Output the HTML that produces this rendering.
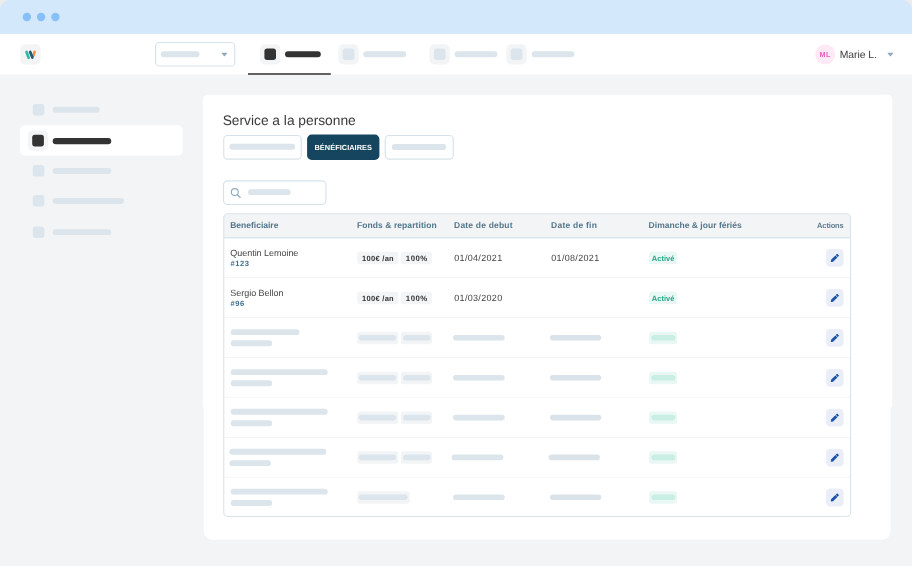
<!DOCTYPE html>
<html lang="fr">
<head>
<meta charset="utf-8">
<title>Service a la personne</title>
<style>
*{box-sizing:border-box;margin:0;padding:0}
html,body{width:912px;height:566px;overflow:hidden;background:#ececec}
body{font-family:"Liberation Sans",sans-serif;color:#333;position:relative}
.win{position:absolute;left:0;top:0;width:912px;height:566px;overflow:hidden;will-change:transform}
.win>svg{position:absolute;left:0;top:0;width:912px;height:566px;display:block}
.t{position:absolute;white-space:nowrap;line-height:1;text-rendering:geometricPrecision}
</style>
</head>
<body>
<div class="win">
<svg viewBox="0 0 912 566" width="912" height="566">
<rect x="0" y="33.5" width="912" height="532.5" fill="#f2f4f6"/>
<rect x="0" y="33.5" width="912" height="41" fill="#fff"/>
<path d="M0 34V10A10 10 0 0 1 10 0H902A10 10 0 0 1 912 10V34Z" fill="#d4e8fc"/>
<circle cx="26.9" cy="17" r="4.2" fill="#86c0f6"/>
<circle cx="41.1" cy="17" r="4.2" fill="#86c0f6"/>
<circle cx="55.4" cy="17" r="4.2" fill="#86c0f6"/>
<rect x="20.3" y="44.3" width="20.3" height="20.2" rx="5" fill="#f2f4f6"/>
<g stroke-linecap="round" fill="none"><path d="M26.5 51.9L28.6 57.7" stroke="#2db9a0" stroke-width="2.7"/><path d="M34.55 51.8L33.4 55.6" stroke="#f68e46" stroke-width="2.6"/><path d="M30.2 51.9L32.4 57.5" stroke="#1f5879" stroke-width="2.7"/></g>
<rect x="155.55" y="42.55" width="79.2" height="23.5" rx="3.9" fill="#fff" stroke="#d6e2e9" stroke-width="1.1"/>
<rect x="160.8" y="51.2" width="38.7" height="6" rx="3" fill="#dbe5eb"/>
<path transform="translate(221.2,52.4)" d="M0.9 0.3H5.5Q6.4 0.4 5.8 1.1L3.7 3.6Q3.2 4.1 2.7 3.6L0.6 1.1Q0 0.4 0.9 0.3Z" fill="#8faabc"/>
<path transform="translate(887.2,52.4)" d="M0.9 0.3H5.5Q6.4 0.4 5.8 1.1L3.7 3.6Q3.2 4.1 2.7 3.6L0.6 1.1Q0 0.4 0.9 0.3Z" fill="#8faabc"/>
<rect x="260" y="44.3" width="20.3" height="20.2" rx="5" fill="#f2f4f6"/>
<rect x="264.4" y="48.4" width="11.6" height="11.6" rx="2.7" fill="#333"/>
<rect x="285" y="51.2" width="35.8" height="6" rx="3" fill="#333"/>
<rect x="338.3" y="44.3" width="20.3" height="20.2" rx="5" fill="#f2f4f6"/>
<rect x="342.7" y="48.4" width="11.6" height="11.6" rx="2.7" fill="#dbe5eb"/>
<rect x="363.3" y="51.2" width="42.9" height="6" rx="3" fill="#dbe5eb"/>
<rect x="429.5" y="44.3" width="20.3" height="20.2" rx="5" fill="#f2f4f6"/>
<rect x="433.9" y="48.4" width="11.6" height="11.6" rx="2.7" fill="#dbe5eb"/>
<rect x="454.7" y="51.2" width="42.6" height="6" rx="3" fill="#dbe5eb"/>
<rect x="506.3" y="44.3" width="20.3" height="20.2" rx="5" fill="#f2f4f6"/>
<rect x="510.7" y="48.4" width="11.6" height="11.6" rx="2.7" fill="#dbe5eb"/>
<rect x="531.7" y="51.2" width="42.6" height="6" rx="3" fill="#dbe5eb"/>
<rect x="248" y="73" width="82.8" height="2" fill="#626262"/>
<circle cx="825.2" cy="54.3" r="10.05" fill="#fdeaf6"/>
<rect x="32.8" y="104" width="11.5" height="11.5" rx="2.7" fill="#dbe5eb"/>
<rect x="52.7" y="106.8" width="47.1" height="5.9" rx="2.95" fill="#dbe5eb"/>
<rect x="32.8" y="165.1" width="11.5" height="11.5" rx="2.7" fill="#dbe5eb"/>
<rect x="52.7" y="168" width="58.5" height="5.9" rx="2.95" fill="#dbe5eb"/>
<rect x="32.8" y="195" width="11.5" height="11.5" rx="2.7" fill="#dbe5eb"/>
<rect x="52.7" y="198" width="71.3" height="5.9" rx="2.95" fill="#dbe5eb"/>
<rect x="32.8" y="226.4" width="11.5" height="11.5" rx="2.7" fill="#dbe5eb"/>
<rect x="52.7" y="229.2" width="58.5" height="5.9" rx="2.95" fill="#dbe5eb"/>
<rect x="20.2" y="125.3" width="162.3" height="30.3" rx="4.5" fill="#fff"/>
<rect x="27.8" y="130.5" width="20.4" height="20.2" rx="5" fill="#f2f4f6"/>
<rect x="32.2" y="134.8" width="11.7" height="11.6" rx="2.7" fill="#333"/>
<rect x="52.7" y="138.1" width="58.5" height="6.1" rx="3.05" fill="#333"/>
<path d="M202.8 99.3A4.5 4.5 0 0 1 207.3 94.8H887.6A4.5 4.5 0 0 1 892.1 99.3V406.2Q890.5 406.6 890.5 408.6V531.3A8.5 8.5 0 0 1 882 539.8H212.2A8.5 8.5 0 0 1 203.7 531.3V406.5H202.8Z" fill="#fff"/>
<rect x="223.75" y="135.55" width="77.5" height="23.6" rx="3.9" fill="#fff" stroke="#d6e2e9" stroke-width="1.1"/>
<rect x="229.3" y="143.8" width="65.9" height="6" rx="3" fill="#dbe5eb"/>
<rect x="307.1" y="134.6" width="72.3" height="25.3" rx="4.5" fill="#15455f"/>
<rect x="385.25" y="135.55" width="68" height="23.6" rx="3.9" fill="#fff" stroke="#d6e2e9" stroke-width="1.1"/>
<rect x="391.8" y="143.9" width="54.4" height="6" rx="3" fill="#dbe5eb"/>
<rect x="223.55" y="180.85" width="102.4" height="23.6" rx="3.9" fill="#fff" stroke="#d6e2e9" stroke-width="1.1"/>
<g fill="none" stroke="#8faabc"><circle cx="234.8" cy="192.1" r="3.45" stroke-width="1.1"/><path d="M237.4 194.7L240.1 197.3" stroke-width="1.2" stroke-linecap="round"/></g>
<rect x="248" y="189.2" width="42.7" height="5.9" rx="2.95" fill="#dbe5eb"/>
<path d="M223.75 237.5V217.7A4 4 0 0 1 227.75 213.7H846.55A4 4 0 0 1 850.55 217.7V237.5Z" fill="#f2f4f6"/>
<rect x="223.75" y="237" width="626.8" height="1.4" fill="#dae5eb"/>
<rect x="224.25" y="277.1" width="625.8" height="1" fill="#f3f5f7"/>
<rect x="224.25" y="317" width="625.8" height="1" fill="#f3f5f7"/>
<rect x="224.25" y="356.9" width="625.8" height="1" fill="#f3f5f7"/>
<rect x="224.25" y="396.8" width="625.8" height="1" fill="#f3f5f7"/>
<rect x="224.25" y="436.9" width="625.8" height="1" fill="#f3f5f7"/>
<rect x="224.25" y="476.8" width="625.8" height="1" fill="#f3f5f7"/>
<rect x="223.75" y="213.7" width="626.8" height="302.8" rx="4" fill="none" stroke="#dae5eb" stroke-width="1.15"/>
<rect x="357.2" y="251.8" width="41.1" height="12.5" rx="3" fill="#f2f4f6"/>
<rect x="400.8" y="251.8" width="31.2" height="12.5" rx="3" fill="#f2f4f6"/>
<rect x="649.1" y="251.8" width="27.9" height="12.5" rx="3" fill="#e9f8f4"/>
<rect x="826" y="249" width="17.7" height="17.8" rx="4.2" fill="#e9eef8"/>
<path transform="translate(830.85,253.95) scale(0.0156)" d="M290.74 93.24l128.02 128.02-277.99 277.99-114.14 12.6C11.35 513.54-1.56 500.62.14 485.34l12.7-114.22 277.9-277.88zm207.2-19.06l-60.11-60.11c-18.75-18.75-49.16-18.75-67.91 0l-56.55 56.55 128.02 128.02 56.55-56.55c18.75-18.76 18.75-49.16 0-67.91z" fill="#1d52a8"/>
<rect x="357.2" y="291.8" width="41.1" height="12.5" rx="3" fill="#f2f4f6"/>
<rect x="400.8" y="291.8" width="31.2" height="12.5" rx="3" fill="#f2f4f6"/>
<rect x="649.1" y="291.8" width="27.9" height="12.5" rx="3" fill="#e9f8f4"/>
<rect x="826" y="289" width="17.7" height="17.8" rx="4.2" fill="#e9eef8"/>
<path transform="translate(830.85,293.95) scale(0.0156)" d="M290.74 93.24l128.02 128.02-277.99 277.99-114.14 12.6C11.35 513.54-1.56 500.62.14 485.34l12.7-114.22 277.9-277.88zm207.2-19.06l-60.11-60.11c-18.75-18.75-49.16-18.75-67.91 0l-56.55 56.55 128.02 128.02 56.55-56.55c18.75-18.76 18.75-49.16 0-67.91z" fill="#1d52a8"/>
<rect x="230.7" y="329.2" width="68.6" height="5.9" rx="2.95" fill="#dbe5eb"/>
<rect x="230.7" y="340.3" width="41.5" height="5.9" rx="2.95" fill="#dbe5eb"/>
<rect x="357.2" y="331.7" width="41.1" height="12.5" rx="3" fill="#f2f4f6"/>
<rect x="400.8" y="331.7" width="31.2" height="12.5" rx="3" fill="#f2f4f6"/>
<rect x="358.8" y="335" width="37.4" height="5.6" rx="2.8" fill="#dbe5eb"/>
<rect x="403" y="335" width="27.5" height="5.6" rx="2.8" fill="#dbe5eb"/>
<rect x="649.1" y="331.7" width="27.9" height="12.5" rx="3" fill="#e9f8f4"/>
<rect x="651.2" y="335" width="24.1" height="5.6" rx="2.8" fill="#c9eee4"/>
<rect x="453" y="335" width="51.7" height="5.6" rx="2.8" fill="#dbe5eb"/>
<rect x="550" y="335" width="51.3" height="5.6" rx="2.8" fill="#dbe3ea"/>
<rect x="826" y="329" width="17.7" height="17.8" rx="4.2" fill="#e9eef8"/>
<path transform="translate(830.85,333.95) scale(0.0156)" d="M290.74 93.24l128.02 128.02-277.99 277.99-114.14 12.6C11.35 513.54-1.56 500.62.14 485.34l12.7-114.22 277.9-277.88zm207.2-19.06l-60.11-60.11c-18.75-18.75-49.16-18.75-67.91 0l-56.55 56.55 128.02 128.02 56.55-56.55c18.75-18.76 18.75-49.16 0-67.91z" fill="#1d52a8"/>
<rect x="230.7" y="369.2" width="97" height="5.9" rx="2.95" fill="#dbe5eb"/>
<rect x="230.7" y="380.3" width="41.5" height="5.9" rx="2.95" fill="#dbe5eb"/>
<rect x="357.2" y="371.7" width="41.1" height="12.5" rx="3" fill="#f2f4f6"/>
<rect x="400.8" y="371.7" width="31.2" height="12.5" rx="3" fill="#f2f4f6"/>
<rect x="358.8" y="375" width="37.4" height="5.6" rx="2.8" fill="#dbe5eb"/>
<rect x="403" y="375" width="27.5" height="5.6" rx="2.8" fill="#dbe5eb"/>
<rect x="649.1" y="371.7" width="27.9" height="12.5" rx="3" fill="#e9f8f4"/>
<rect x="651.2" y="375" width="24.1" height="5.6" rx="2.8" fill="#c9eee4"/>
<rect x="453" y="375" width="51.7" height="5.6" rx="2.8" fill="#dbe5eb"/>
<rect x="550" y="375" width="51.3" height="5.6" rx="2.8" fill="#dbe3ea"/>
<rect x="826" y="369" width="17.7" height="17.8" rx="4.2" fill="#e9eef8"/>
<path transform="translate(830.85,373.95) scale(0.0156)" d="M290.74 93.24l128.02 128.02-277.99 277.99-114.14 12.6C11.35 513.54-1.56 500.62.14 485.34l12.7-114.22 277.9-277.88zm207.2-19.06l-60.11-60.11c-18.75-18.75-49.16-18.75-67.91 0l-56.55 56.55 128.02 128.02 56.55-56.55c18.75-18.76 18.75-49.16 0-67.91z" fill="#1d52a8"/>
<rect x="230.7" y="408.8" width="97" height="5.9" rx="2.95" fill="#dbe5eb"/>
<rect x="230.7" y="420.3" width="41.5" height="5.9" rx="2.95" fill="#dbe5eb"/>
<rect x="357.2" y="411.5" width="41.1" height="12.5" rx="3" fill="#f2f4f6"/>
<rect x="400.8" y="411.5" width="31.2" height="12.5" rx="3" fill="#f2f4f6"/>
<rect x="358.8" y="414.8" width="37.4" height="5.6" rx="2.8" fill="#dbe5eb"/>
<rect x="403" y="414.8" width="27.5" height="5.6" rx="2.8" fill="#dbe5eb"/>
<rect x="649.1" y="411.5" width="27.9" height="12.5" rx="3" fill="#e9f8f4"/>
<rect x="651.2" y="414.8" width="24.1" height="5.6" rx="2.8" fill="#c9eee4"/>
<rect x="453" y="414.8" width="51.7" height="5.6" rx="2.8" fill="#dbe5eb"/>
<rect x="550" y="414.8" width="51.3" height="5.6" rx="2.8" fill="#dbe3ea"/>
<rect x="826" y="408.8" width="17.7" height="17.8" rx="4.2" fill="#e9eef8"/>
<path transform="translate(830.85,413.75) scale(0.0156)" d="M290.74 93.24l128.02 128.02-277.99 277.99-114.14 12.6C11.35 513.54-1.56 500.62.14 485.34l12.7-114.22 277.9-277.88zm207.2-19.06l-60.11-60.11c-18.75-18.75-49.16-18.75-67.91 0l-56.55 56.55 128.02 128.02 56.55-56.55c18.75-18.76 18.75-49.16 0-67.91z" fill="#1d52a8"/>
<rect x="229.35" y="448.8" width="96.95" height="5.9" rx="2.95" fill="#dbe5eb"/>
<rect x="229.35" y="460.2" width="41.5" height="5.9" rx="2.95" fill="#dbe5eb"/>
<rect x="357.2" y="451.3" width="41.1" height="12.5" rx="3" fill="#f2f4f6"/>
<rect x="400.8" y="451.3" width="31.2" height="12.5" rx="3" fill="#f2f4f6"/>
<rect x="358.8" y="454.6" width="37.4" height="5.6" rx="2.8" fill="#dbe5eb"/>
<rect x="403" y="454.6" width="27.5" height="5.6" rx="2.8" fill="#dbe5eb"/>
<rect x="649.1" y="451.3" width="27.9" height="12.5" rx="3" fill="#e9f8f4"/>
<rect x="651.2" y="454.6" width="24.1" height="5.6" rx="2.8" fill="#c9eee4"/>
<rect x="451.65" y="454.6" width="51.7" height="5.6" rx="2.8" fill="#dbe5eb"/>
<rect x="548.65" y="454.6" width="51.3" height="5.6" rx="2.8" fill="#dbe3ea"/>
<rect x="826" y="448.7" width="17.7" height="17.8" rx="4.2" fill="#e9eef8"/>
<path transform="translate(830.85,453.65) scale(0.0156)" d="M290.74 93.24l128.02 128.02-277.99 277.99-114.14 12.6C11.35 513.54-1.56 500.62.14 485.34l12.7-114.22 277.9-277.88zm207.2-19.06l-60.11-60.11c-18.75-18.75-49.16-18.75-67.91 0l-56.55 56.55 128.02 128.02 56.55-56.55c18.75-18.76 18.75-49.16 0-67.91z" fill="#1d52a8"/>
<rect x="230.7" y="488.7" width="97" height="5.9" rx="2.95" fill="#dbe5eb"/>
<rect x="230.7" y="500" width="41.5" height="5.9" rx="2.95" fill="#dbe5eb"/>
<rect x="357.2" y="491.2" width="52.5" height="12.5" rx="3" fill="#f2f4f6"/>
<rect x="358.8" y="494.5" width="48.7" height="5.6" rx="2.8" fill="#dbe5eb"/>
<rect x="649.1" y="491.2" width="27.9" height="12.5" rx="3" fill="#e9f8f4"/>
<rect x="651.2" y="494.5" width="24.1" height="5.6" rx="2.8" fill="#c9eee4"/>
<rect x="453" y="494.5" width="51.7" height="5.6" rx="2.8" fill="#dbe5eb"/>
<rect x="550" y="494.5" width="51.3" height="5.6" rx="2.8" fill="#dbe3ea"/>
<rect x="826" y="488.6" width="17.7" height="17.8" rx="4.2" fill="#e9eef8"/>
<path transform="translate(830.85,493.55) scale(0.0156)" d="M290.74 93.24l128.02 128.02-277.99 277.99-114.14 12.6C11.35 513.54-1.56 500.62.14 485.34l12.7-114.22 277.9-277.88zm207.2-19.06l-60.11-60.11c-18.75-18.75-49.16-18.75-67.91 0l-56.55 56.55 128.02 128.02 56.55-56.55c18.75-18.76 18.75-49.16 0-67.91z" fill="#1d52a8"/>
</svg>
<span class="t" id="ml" style="left:819.4px;top:50.8px;font-size:7.2px;font-weight:bold;letter-spacing:.7px;color:#e85cc2">ML</span>
<span class="t" id="marie" style="left:839.8px;top:51px;font-size:10.4px;letter-spacing:-.08px;color:#3c3c3c">Marie L.</span>
<span class="t" id="title" style="left:222.7px;top:113.7px;font-size:13.8px;letter-spacing:-.02px;color:#3a3a3a">Service a la personne</span>
<span class="t" id="benef" style="left:314.5px;top:143.6px;font-size:7.4px;font-weight:bold;letter-spacing:.03px;color:#fff">BÉNÉFICIAIRES</span>
<span class="t" id="h1" style="left:230.2px;top:220.6px;font-size:8.5px;font-weight:bold;color:#54768a;">Beneficiaire</span>
<span class="t" id="h2" style="left:356.9px;top:220.6px;font-size:8.5px;font-weight:bold;color:#54768a;letter-spacing:.08px">Fonds &amp; repartition</span>
<span class="t" id="h3" style="left:454.1px;top:220.6px;font-size:8.5px;font-weight:bold;color:#54768a;letter-spacing:.19px">Date de debut</span>
<span class="t" id="h4" style="left:551.1px;top:220.6px;font-size:8.5px;font-weight:bold;color:#54768a;letter-spacing:.23px">Date de fin</span>
<span class="t" id="h5" style="left:648.6px;top:220.6px;font-size:8.5px;font-weight:bold;color:#54768a;letter-spacing:.025px">Dimanche &amp; jour fériés</span>
<span class="t" id="h6" style="left:817.1px;top:221.7px;font-size:7.5px;font-weight:bold;letter-spacing:-.15px;color:#5d7c8e">Actions</span>
<span class="t" id="n1" style="left:230.3px;top:248.5px;font-size:9px;color:#444;letter-spacing:-.035px">Quentin Lemoine</span>
<span class="t" id="r1" style="left:230.5px;top:260.2px;font-size:7.6px;font-weight:bold;color:#3f6f8c;letter-spacing:.5px">#123</span>
<span class="t" id="b1" style="left:362px;top:255.4px;font-size:7.5px;font-weight:bold;color:#333;letter-spacing:.3px">100€ /an</span>
<span class="t" id="p1" style="left:405.8px;top:255.2px;font-size:7.5px;font-weight:bold;color:#333;font-size:7.8px;letter-spacing:.5px">100%</span>
<span class="t" id="d1" style="left:454.3px;top:254.1px;font-size:9px;color:#444;letter-spacing:.31px">01/04/2021</span>
<span class="t" id="e1" style="left:551.3px;top:254.1px;font-size:9px;color:#444;letter-spacing:.31px">01/08/2021</span>
<span class="t" id="a1" style="left:651.8px;top:254.5px;font-size:7.5px;font-weight:bold;color:#333;color:#26a688">Activé</span>
<span class="t" id="n2" style="left:230.3px;top:288.5px;font-size:9px;color:#444;letter-spacing:-.035px">Sergio Bellon</span>
<span class="t" id="r2" style="left:230.5px;top:300.2px;font-size:7.6px;font-weight:bold;color:#3f6f8c;letter-spacing:.5px">#96</span>
<span class="t" id="b2" style="left:362px;top:295.4px;font-size:7.5px;font-weight:bold;color:#333;letter-spacing:.3px">100€ /an</span>
<span class="t" id="p2" style="left:405.8px;top:295.2px;font-size:7.5px;font-weight:bold;color:#333;font-size:7.8px;letter-spacing:.5px">100%</span>
<span class="t" id="d2" style="left:454.3px;top:294.1px;font-size:9px;color:#444;letter-spacing:.31px">01/03/2020</span>
<span class="t" id="a2" style="left:651.8px;top:294.5px;font-size:7.5px;font-weight:bold;color:#333;color:#26a688">Activé</span>
</div>
</body>
</html>
